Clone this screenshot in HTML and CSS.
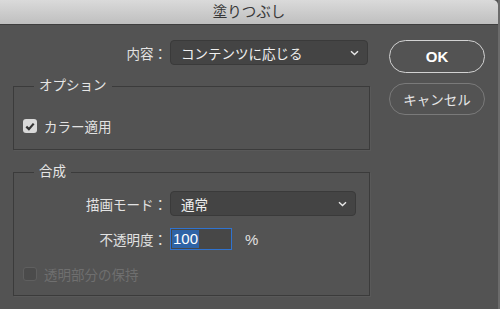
FILE: index.html
```html
<!DOCTYPE html>
<html lang="ja">
<head>
  <meta charset="UTF-8">
  <title>塗りつぶし</title>
  <link rel="stylesheet" href="styles.css">
</head>
<body>

<div class="window">
  <div class="titlebar">塗りつぶし</div>

  <div class="dialog">
    <div class="main">
      <div class="row">
        <span class="row-label wide">内容：</span>
        <div class="select select-content">
          <span>コンテンツに応じる</span>
          <svg class="chevron" width="9" height="6" viewBox="0 0 9 6"><path d="M1 1.2 L4.5 4.6 L8 1.2" fill="none" stroke="#e8e8e8" stroke-width="1.4"/></svg>
        </div>
      </div>

      <fieldset class="group group-options">
        <legend>オプション</legend>
        <label class="check">
          <span class="box checked">
            <svg width="10" height="9" viewBox="0 0 10 9"><path d="M1.3 4.6 L3.9 7.1 L8.7 1.6" fill="none" stroke="#333" stroke-width="2.2"/></svg>
          </span>
          カラー適用
        </label>
      </fieldset>

      <fieldset class="group group-blend">
        <legend>合成</legend>
        <div class="row">
          <span class="row-label">描画モード：</span>
          <div class="select select-mode">
            <span>通常</span>
            <svg class="chevron" width="9" height="6" viewBox="0 0 9 6"><path d="M1 1.2 L4.5 4.6 L8 1.2" fill="none" stroke="#e8e8e8" stroke-width="1.4"/></svg>
          </div>
        </div>
        <div class="row row-opacity">
          <span class="row-label">不透明度：</span>
          <div class="field"><span class="selected">100</span></div>
          <span class="unit">%</span>
        </div>
        <label class="check disabled">
          <span class="box"></span>
          透明部分の保持
        </label>
      </fieldset>
    </div>

    <div class="actions">
      <button class="btn btn-ok">OK</button>
      <button class="btn btn-cancel">キャンセル</button>
    </div>
  </div>
</div>

</body>
</html>
```

FILE: styles.css
```css
body {
  margin: 0;
  padding: 0;
  background-color: #535353;
  font-family: 'Liberation Sans', 'Noto Sans CJK JP', sans-serif;
  font-size: 13.5px;
  color: #e2e2e2;
}

.window {
  width: 500px;
  height: 309px;
  box-sizing: border-box;
  border-right: 2px solid #6b6b6b;
  overflow: hidden;
}

.titlebar {
  height: 25px;
  line-height: 25px;
  text-align: center;
  font-size: 14.5px;
  color: #383838;
  background: linear-gradient(#dadada, #bfbfbf);
  border-bottom: 1px solid #3e3e3e;
  box-sizing: border-box;
  border-top-right-radius: 5px;
}

.dialog {
  display: flex;
  padding: 15px 0 0 13px;
}

.main {
  width: 357px;
}

.row {
  display: flex;
  align-items: center;
  height: 25px;
}

.row-label {
  width: 144px;
  margin-right: 3px;
  text-align: right;
  white-space: nowrap;
}

.row-label.wide {
  width: 154px;
}

.select {
  height: 25px;
  box-sizing: border-box;
  display: flex;
  align-items: center;
  justify-content: space-between;
  padding: 0 8px 0 10px;
  background-color: #444;
  border: 1px solid #3a3a3a;
  border-radius: 4px;
  color: #f0f0f0;
}

.select-content {
  width: 198px;
}

.select-mode {
  width: 186px;
}

.group {
  margin: 0;
  border: 1px solid #3b3b3b;
  padding: 0 9px;
  box-shadow: 1px 1px 0 rgba(255, 255, 255, 0.04);
}

.group legend {
  margin-left: 11px;
  padding: 0 5px;
  line-height: 16px;
  color: #e6e6e6;
}

.group-options {
  margin-top: 13px;
  padding-top: 22px;
  padding-bottom: 13px;
}

.group-blend {
  margin-top: 14px;
  padding-top: 11px;
  padding-bottom: 11px;
}

.row-opacity {
  margin-top: 12px;
  height: 22px;
}

.field {
  width: 62px;
  height: 22px;
  box-sizing: border-box;
  border: 1px solid #2f73d0;
  background-color: #474747;
  padding: 1px;
  display: flex;
  font-size: 15px;
}

.selected {
  background-color: #2e63a6;
  color: #fff;
  line-height: 18px;
  padding: 0 1px;
}

.unit {
  margin-left: 13px;
  font-size: 15px;
}

.check {
  display: flex;
  align-items: center;
  height: 20px;
}

.group-blend .check {
  margin-top: 14px;
}

.box {
  width: 14px;
  height: 14px;
  box-sizing: border-box;
  border-radius: 3px;
  margin-right: 7px;
  display: flex;
  align-items: center;
  justify-content: center;
}

.box.checked {
  background-color: #d9d9d9;
}

.check.disabled {
  color: #6f6f6f;
}

.check.disabled .box {
  background-color: #4b4b4b;
  border: 1px solid #5f5f5f;
}

.actions {
  display: flex;
  flex-direction: column;
  margin-left: 19px;
}

.btn {
  width: 96px;
  font-family: inherit;
  background: transparent;
  border-radius: 17px;
  padding: 0;
}

.btn-ok {
  height: 33px;
  border: 1.5px solid #d2d2d2;
  color: #fff;
  font-size: 15px;
  font-weight: bold;
}

.btn-cancel {
  height: 32px;
  margin-top: 10px;
  border: 1px solid #7a7a7a;
  color: #e6e6e6;
  font-size: 13.5px;
}
```
